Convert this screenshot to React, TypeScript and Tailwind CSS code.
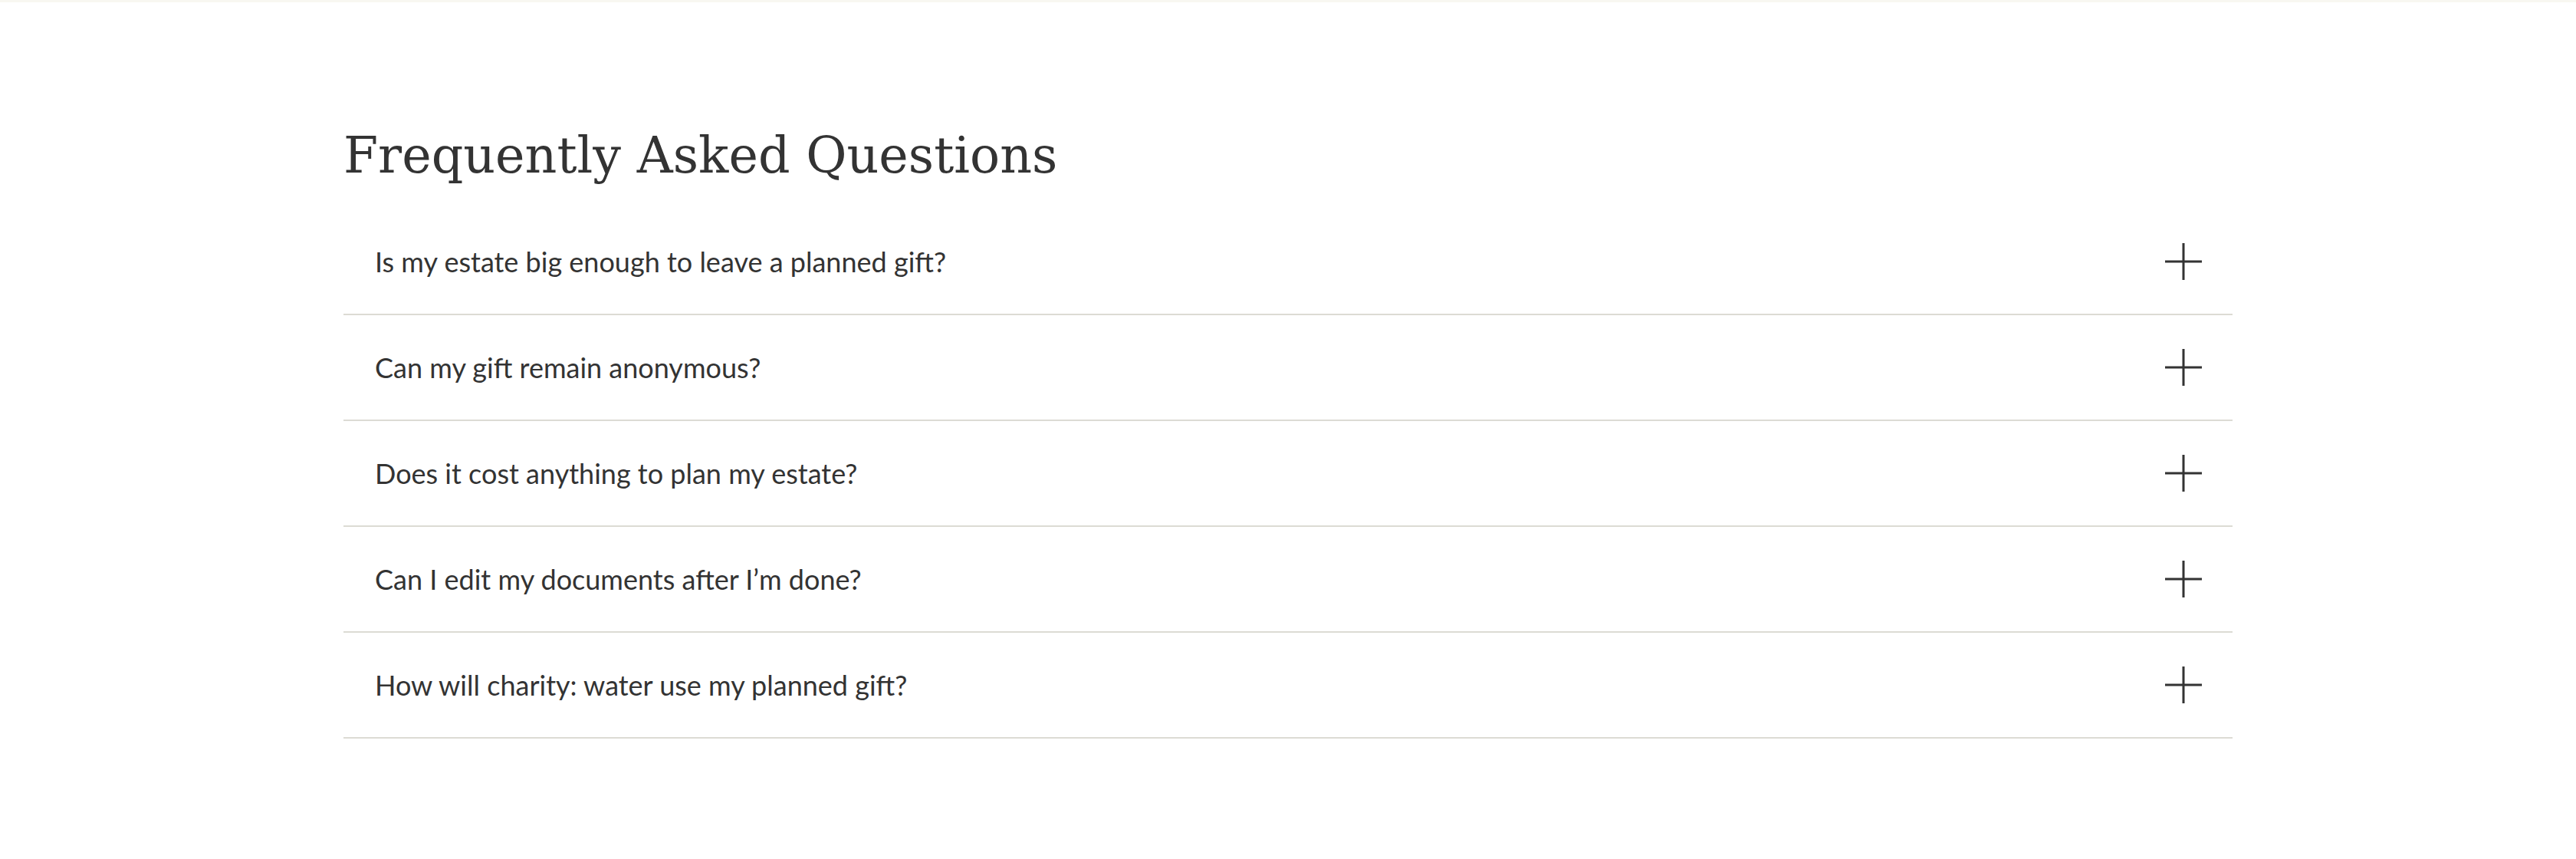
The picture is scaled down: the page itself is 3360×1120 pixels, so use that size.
import React from "react";

const questions = [
  "Is my estate big enough to leave a planned gift?",
  "Can my gift remain anonymous?",
  "Does it cost anything to plan my estate?",
  "Can I edit my documents after I\u2019m done?",
  "How will charity: water use my planned gift?",
];

function Plus() {
  return (
    <svg width="48" height="48" viewBox="0 0 48 48" className="shrink-0" aria-hidden="true">
      <path d="M24 0V48M0 24H48" stroke="#333333" strokeWidth="3" fill="none" />
    </svg>
  );
}

export default function App() {
  return (
    <div className="min-h-[1120px] w-full bg-white">
      <div className="h-[3px] w-full bg-[#f8f7f1]" />
      <section className="mx-auto w-[2464px] pt-[160px]">
        <h2
          className="text-[65px] leading-[80px] text-[#333333] font-normal"
          style={{ fontFamily: '"DejaVu Serif", Georgia, serif' }}
        >
          Frequently Asked Questions
        </h2>
        <div className="mt-[30px]">
          {questions.map((q) => (
            <div
              key={q}
              className="flex h-[138px] items-center justify-between border-b-2 border-[#dcdbd4] pl-[41px] pr-[40px]"
            >
              <span
                className="text-[36px] text-[#333333]"
                style={{ fontFamily: 'Lato, "Noto Sans", sans-serif' }}
              >
                {q}
              </span>
              <Plus />
            </div>
          ))}
        </div>
      </section>
    </div>
  );
}
